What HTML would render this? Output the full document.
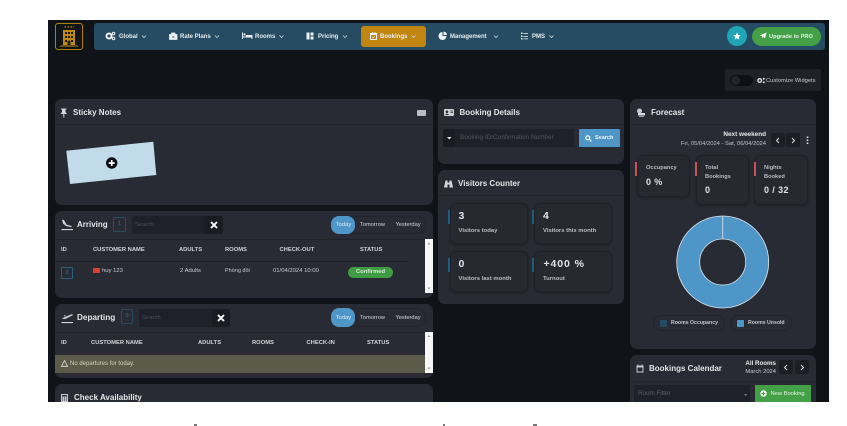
<!DOCTYPE html>
<html><head><meta charset="utf-8">
<style>
html,body{margin:0;padding:0;background:#fff}
#r{position:relative;width:847px;height:426px;overflow:hidden;background:#fff;font-family:"Liberation Sans",sans-serif;color:#dfe2e6;filter:blur(.3px)}
#d{position:absolute;left:48px;top:20px;width:781px;height:382px;background:#101418}
.a{position:absolute;white-space:nowrap}
.b{position:absolute;box-sizing:border-box}
.card{position:absolute;box-sizing:border-box;background:#292b34;border-radius:7px;overflow:hidden}
.line{position:absolute;height:1px;background:#23252d}
.t{position:absolute;white-space:nowrap;font-weight:bold;font-size:8px;color:#e2e4e8;line-height:10px}
.n{position:absolute;white-space:nowrap;font-weight:bold;font-size:6px;color:#e8ecef;line-height:8px}
.th{position:absolute;white-space:nowrap;font-weight:bold;font-size:5.8px;color:#cfd2d7;line-height:8px}
.td{position:absolute;white-space:nowrap;font-size:5.9px;color:#c6c9ce;line-height:8px}
.s{position:absolute;box-sizing:border-box;background:#272931;border:1px solid #1f2128;border-radius:6px;box-shadow:0 1px 2px #1c1e24}
.bar{position:absolute;width:2px;height:14px}
.lab{position:absolute;white-space:nowrap;font-size:5.9px;font-weight:bold;color:#b9bcc3;line-height:8px}
.val{position:absolute;white-space:nowrap;font-size:10.500px;font-weight:bold;color:#dfe2e6;line-height:12px;letter-spacing:.9px}
.sb{position:absolute;left:425px;width:8px;background:#f6f6f6}
.btn{position:absolute;box-sizing:border-box;background:#1b1e25;border-radius:2px}
svg{position:absolute;overflow:visible}
</style></head><body><div id="r">
<div id="d"></div>

<!-- logo -->
<div class="b" style="left:55px;top:23px;width:28px;height:27px;border:1px solid #b07f10;border-radius:3px;background:#111417"></div>
<svg style="left:55px;top:23px" width="28" height="27" viewBox="0 0 28 27">
<path d="M8 7h12v15H8z" fill="#c0890f"/><path d="M6 22h16l2 2H4z" fill="#6a5114"/>
<path d="M9.500 4h1.600M12.500 4h1.600M15.500 4h1.600M18.500 4h.8" stroke="#9a7414" stroke-width="1.400"/>
<path d="M10 9h2v2h-2zM13 9h2v2h-2zM16 9h2v2h-2zM10 13h2v2h-2zM13 13h2v2h-2zM16 13h2v2h-2zM10 17h2v2h-2zM16 17h2v2h-2zM12.500 22v-3a1.500 1.500 0 0 1 3 0v3z" fill="#1a1a14"/>
</svg>

<!-- nav -->
<div class="b" style="left:94px;top:23px;width:731px;height:27px;background:#254c63;border-radius:3px"></div>
<div class="b" style="left:361px;top:26px;width:65px;height:21px;background:#c0860f;border-radius:3px"></div>
<svg style="left:0;top:0" width="847" height="60" fill="#eef1f3">
<circle cx="109" cy="36" r="2.500" fill="none" stroke="#eef1f3" stroke-width="2"/><circle cx="113.500" cy="33.500" r="1.300" fill="none" stroke="#eef1f3"/><circle cx="113.500" cy="38.500" r="1.300" fill="none" stroke="#eef1f3"/>
<path d="M169.500 34.500h7.500v5h-7.500zM171.500 34.500v-1.500h3.500v1.500" fill="#eef1f3" stroke="#eef1f3" stroke-width=".8"/><path d="M172.300 36.500h2v1h-2z" fill="#254c63"/>
<path d="M242 32.500v6.500h1v-1.500h8.500V39h1v-4h-6.500v1.500H243v-4z"/><rect x="243.500" y="33.500" width="2" height="2"/>
<path d="M306.500 32.500h3v7h-3zM310.500 32.500h3v3h-3zM310.500 36.500h3v3h-3z"/>
<path d="M370.500 33.500h6v6h-6z" fill="none" stroke="#eef1f3"/><path d="M370.500 33h6v2h-6zM372 32h.8v2H372zM374.500 32h.8v2h-.8z"/><path d="M372 37l1 1 2-2" fill="none" stroke="#eef1f3" stroke-width=".6"/>
<path d="M442.500 32a4 4 0 1 0 4 4h-4z"/><path d="M443.500 31.500a4 4 0 0 1 3.500 3.500h-3.500z"/>
<path d="M521 32.500h1.500v1.500H521zM521 35.500h1.500V37H521zM521 38h1.500v1.500H521zM523.500 33h4.500v.8h-4.500zM523.500 36h4.500v.8h-4.500zM523.500 38.500h4.500v.8h-4.500z"/>
<g fill="none" stroke="#cfd8de" stroke-width=".8">
<path d="M142 35.500l2 2 2-2M215 35.500l2 2 2-2M279.500 35.500l2 2 2-2M343 35.500l2 2 2-2M411.500 35.500l2 2 2-2M494 35.500l2 2 2-2M549.500 35.500l2 2 2-2"/>
</g>
</svg>
<div class="n" style="left:119px;top:33px">Global</div>
<div class="n" style="left:180px;top:33px">Rate Plans</div>
<div class="n" style="left:255px;top:33px">Rooms</div>
<div class="n" style="left:318px;top:33px">Pricing</div>
<div class="n" style="left:380px;top:33px">Bookings</div>
<div class="n" style="left:450px;top:33px">Management</div>
<div class="n" style="left:532px;top:33px">PMS</div>
<div class="b" style="left:727px;top:26px;width:20px;height:20px;border-radius:50%;background:#1fa5b5"></div>
<svg style="left:727px;top:26px" width="20" height="20"><path d="M10 6.500l1.100 2.400 2.600.3-1.900 1.800.5 2.600-2.300-1.300-2.300 1.300.5-2.600-1.900-1.800 2.600-.3z" fill="#fff"/></svg>
<div class="b" style="left:752px;top:27px;width:69px;height:19px;border-radius:10px;background:#43a047"></div>
<svg style="left:759px;top:32px" width="8" height="8"><path d="M7.500.5L6 6.500 4.500 4.500 3.500 6.500 3 4 .5 3.500z" fill="#fff"/></svg>
<div class="n" style="left:769px;top:32.500px;color:#e7f3e6;font-size:5.700px">Upgrade to PRO</div>

<!-- customize -->
<div class="b" style="left:725px;top:69px;width:96px;height:22px;background:#1f2228;border-radius:2px"></div>
<div class="b" style="left:730px;top:75px;width:23px;height:11px;background:#0d1014;border-radius:6px"></div>
<div class="b" style="left:731px;top:76px;width:9px;height:9px;background:#22252c;border-radius:50%"></div>
<svg style="left:757px;top:77px" width="9" height="7"><circle cx="2.700" cy="3.500" r="1.800" fill="none" stroke="#dfe2e6" stroke-width="1.400"/><circle cx="6.800" cy="1.700" r="1" fill="#dfe2e6"/><circle cx="6.800" cy="5.300" r="1" fill="#dfe2e6"/></svg>
<div class="td" style="left:766px;top:77px;font-size:5.750px;color:#c9ccd1">Customize Widgets</div>

<!-- sticky -->
<div class="card" style="left:55px;top:99px;width:378px;height:106px"></div>
<div class="line" style="left:55px;top:124px;width:378px"></div>
<svg style="left:60px;top:108px" width="8" height="10"><path d="M1 .500h5.500v1H5.500v2.500L7 6H4.300v3.500H3.300V6H.5L2 4V1.500H1z" fill="#d4d6da"/></svg>
<div class="t" style="left:73px;top:108px">Sticky Notes</div>
<div class="b" style="left:417px;top:110px;width:9px;height:6px;background:#b9bcc0;border-radius:1px"></div>
<svg style="left:0;top:0" width="847" height="200"><polygon points="66.300,150.700 153.300,141.700 156.300,175 70,184" fill="#c1dbea"/><circle cx="111.700" cy="163" r="5.700" fill="#0a0c10"/><path d="M111.700 160v6M108.700 163h6" stroke="#fff" stroke-width="1.700"/></svg>

<!-- arriving -->
<div class="card" style="left:55px;top:211px;width:378px;height:87px"></div>
<div class="line" style="left:55px;top:239px;width:378px;background:#1f2128"></div>
<div class="line" style="left:55px;top:261px;width:353px;background:#1f2128"></div>
<svg style="left:61px;top:219px" width="13" height="12"><path d="M1 .500l2 .6 2.500 4.500 4 1.100c1 .3 1.500 1 1.200 1.500L5 7 2 4.500zM.5 10h11.500v1.100H.5z" fill="#d4d6da"/></svg>
<div class="t" style="left:77px;top:220px">Arriving</div>
<div class="b" style="left:113px;top:217px;width:13px;height:15px;border:1px solid #254c63;border-radius:2px;color:#2f6a8a;font-size:5.500px;text-align:center;line-height:13px">1</div>
<div class="b" style="left:132px;top:216px;width:73px;height:18px;background:#1e2129;border-radius:2px 0 0 2px"></div>
<div class="td" style="left:135px;top:221px;color:#4c5059">Search</div>
<div class="b" style="left:205px;top:216px;width:18px;height:18px;background:#191c22;border-radius:0 2px 2px 0"></div>
<svg style="left:210px;top:221px" width="8" height="8"><path d="M1 1l6 6M7 1l-6 6" stroke="#fff" stroke-width="1.900"/></svg>
<div class="b" style="left:331px;top:216px;width:95px;height:18px;border:1px solid #22252c;border-radius:9px"></div>
<div class="b" style="left:331px;top:216px;width:24px;height:18px;background:#4f96c8;border-radius:8px"></div>
<div class="td" style="left:335.500px;top:221px;color:#dbe9f3">Today</div>
<div class="td" style="left:360px;top:221px;color:#d3d6da;font-size:5.700px">Tomorrow</div>
<div class="td" style="left:395.500px;top:221px;color:#d3d6da;font-size:5.700px">Yesterday</div>
<div class="sb" style="top:239px;height:54px"></div>
<svg style="left:425px;top:239px" width="8" height="54"><path d="M2.500 5.500L4 3.500l1.500 2zM2.500 48.500L4 50.500l1.500-2z" fill="#9a9a9a"/></svg>
<div class="th" style="left:61px;top:246px">ID</div>
<div class="th" style="left:93px;top:246px">CUSTOMER NAME</div>
<div class="th" style="left:179px;top:246px">ADULTS</div>
<div class="th" style="left:225px;top:246px">ROOMS</div>
<div class="th" style="left:279.500px;top:246px">CHECK-OUT</div>
<div class="th" style="left:360px;top:246px">STATUS</div>
<div class="b" style="left:61px;top:267px;width:12px;height:12px;border:1px solid #2a5f7d;border-radius:1px;color:#3f7ea1;font-size:5.500px;text-align:center;line-height:11px">2</div>
<div class="b" style="left:93px;top:268px;width:7px;height:5px;background:#d8402c"></div>
<div class="td" style="left:102px;top:267px">huy 123</div>
<div class="td" style="left:180px;top:267px">2 Adults</div>
<div class="td" style="left:225px;top:267px;font-size:5.500px;font-family:'Liberation Sans','Noto Sans CJK SC',sans-serif">Phòng đôi</div>
<div class="td" style="left:273px;top:267px">01/04/2024 10:00</div>
<div class="b" style="left:348px;top:267px;width:45px;height:11px;background:#3f9c45;border-radius:6px;color:#d9edd9;font-size:5.800px;font-weight:bold;text-align:center;line-height:11px">Confirmed</div>

<!-- departing -->
<div class="card" style="left:55px;top:304px;width:378px;height:74px"></div>
<div class="line" style="left:55px;top:332px;width:378px;background:#1f2128"></div>
<svg style="left:61px;top:312px" width="13" height="12"><path d="M.5 6.500l9.500-4c1-.4 2 0 2.200.5L4 7zM.5 10h11.500v1.100H.5zM3 3l2 .8-1.500.8z" fill="#d4d6da"/></svg>
<div class="t" style="left:77px;top:312.500px;font-size:8.200px">Departing</div>
<div class="b" style="left:121px;top:309px;width:12px;height:15px;border:1px solid #254c63;border-radius:2px;color:#2f6a8a;font-size:5.500px;text-align:center;line-height:13px">0</div>
<div class="b" style="left:139px;top:309px;width:73px;height:18px;background:#1e2129;border-radius:2px 0 0 2px"></div>
<div class="td" style="left:142px;top:314px;color:#4c5059">Search</div>
<div class="b" style="left:212px;top:309px;width:18px;height:18px;background:#191c22;border-radius:0 2px 2px 0"></div>
<svg style="left:217px;top:314px" width="8" height="8"><path d="M1 1l6 6M7 1l-6 6" stroke="#fff" stroke-width="1.900"/></svg>
<div class="b" style="left:331px;top:308px;width:95px;height:19px;border:1px solid #22252c;border-radius:9px"></div>
<div class="b" style="left:331px;top:308px;width:24px;height:19px;background:#4f96c8;border-radius:8px"></div>
<div class="td" style="left:335.500px;top:314px;color:#dbe9f3">Today</div>
<div class="td" style="left:360px;top:314px;color:#d3d6da;font-size:5.700px">Tomorrow</div>
<div class="td" style="left:395.500px;top:314px;color:#d3d6da;font-size:5.700px">Yesterday</div>
<div class="sb" style="top:332px;height:41px"></div>
<svg style="left:425px;top:332px" width="8" height="41"><path d="M2.500 5L4 3l1.500 2zM2.500 35.500L4 37.500l1.500-2z" fill="#9a9a9a"/></svg>
<div class="th" style="left:61px;top:339px">ID</div>
<div class="th" style="left:91px;top:339px">CUSTOMER NAME</div>
<div class="th" style="left:198px;top:339px">ADULTS</div>
<div class="th" style="left:252px;top:339px">ROOMS</div>
<div class="th" style="left:306.500px;top:339px">CHECK-IN</div>
<div class="th" style="left:367px;top:339px">STATUS</div>
<div class="b" style="left:55px;top:355px;width:370px;height:18px;background:#5c5a48"></div>
<svg style="left:61px;top:360px" width="7" height="7"><path d="M3.500 .6L6.600 6.300H.4z" fill="none" stroke="#e4e3da" stroke-width=".8"/></svg>
<div class="td" style="left:70px;top:360px;color:#d5d4c8;font-size:6px">No departures for today.</div>

<!-- check availability -->
<div class="card" style="left:55px;top:384px;width:378px;height:18px;border-radius:7px 7px 0 0"></div>
<svg style="left:61px;top:394px" width="7" height="8"><path d="M0 0h7v8H0z" fill="#c8cace"/><path d="M1 1h5v1.500H1zM1 3.500h1v1H1zM3 3.500h1v1H3zM5 3.500h1v1H5zM1 5.500h1v1H1zM3 5.500h1v1H3zM5 5.500h1v1H5z" fill="#292b34"/></svg>
<div class="t" style="left:74px;top:393px;height:9px;overflow:hidden">Check Availability</div>

<!-- booking details -->
<div class="card" style="left:438px;top:99px;width:186px;height:65px"></div>
<div class="line" style="left:438px;top:124px;width:186px"></div>
<svg style="left:444px;top:109px" width="10" height="7"><rect width="10" height="7" rx="1" fill="#cfd1d5"/><circle cx="3" cy="2.800" r="1.300" fill="#292b34"/><path d="M1 6c.3-1.500 3.700-1.500 4 0z" fill="#292b34"/><path d="M6.500 2h2.500M6.500 3.500h2.500" stroke="#292b34" stroke-width=".7"/></svg>
<div class="t" style="left:459.500px;top:108px">Booking Details</div>
<div class="b" style="left:443px;top:129px;width:12px;height:18px;background:#191c22;border-radius:2px 0 0 2px"></div>
<svg style="left:447px;top:137px" width="5" height="3"><path d="M0 0h4.500L2.250 2.500z" fill="#dfe2e6"/></svg>
<div class="b" style="left:455px;top:129px;width:119px;height:18px;background:#1e2129"></div>
<div class="td" style="left:460px;top:134px;color:#52565f;font-size:6.400px">Booking ID/Confirmation Number</div>
<div class="b" style="left:578.500px;top:129px;width:41.500px;height:18px;background:#4f96c8;border-radius:1px"></div>
<svg style="left:585px;top:134.500px" width="7" height="7"><circle cx="2.800" cy="2.800" r="2" fill="none" stroke="#fff" stroke-width="1.100"/><path d="M4.300 4.300L6.500 6.500" stroke="#fff" stroke-width="1.200"/></svg>
<div class="td" style="left:595px;top:134px;color:#eaf2f8;font-weight:bold;font-size:5.500px">Search</div>

<!-- visitors -->
<div class="card" style="left:438px;top:170px;width:186px;height:134px"></div>
<div class="line" style="left:438px;top:195px;width:186px"></div>
<svg style="left:444px;top:180px" width="9" height="8"><path d="M1.500 .5h2v2h2v-2h2L9 7.500H5.500V4.500h-2v3H0z" fill="#d4d6da"/></svg>
<div class="t" style="left:458px;top:179px">Visitors Counter</div>
<div class="s" style="left:450px;top:203px;width:78px;height:41px"></div>
<div class="s" style="left:534px;top:203px;width:78px;height:41px"></div>
<div class="s" style="left:450px;top:251px;width:78px;height:41px"></div>
<div class="s" style="left:534px;top:251px;width:78px;height:41px"></div>
<div class="bar" style="left:448px;top:210px;background:#1f5d80"></div>
<div class="bar" style="left:532px;top:210px;background:#1f5d80"></div>
<div class="bar" style="left:448px;top:258px;background:#1f5d80"></div>
<div class="bar" style="left:532px;top:258px;background:#1f5d80"></div>
<div class="val" style="left:458.500px;top:210px">3</div>
<div class="val" style="left:543px;top:210px">4</div>
<div class="val" style="left:458.500px;top:258px">0</div>
<div class="val" style="left:543.500px;top:258px">+400 %</div>
<div class="lab" style="left:458.500px;top:227px">Visitors today</div>
<div class="lab" style="left:543px;top:227px">Visitors this month</div>
<div class="lab" style="left:458.500px;top:275px">Visitors last month</div>
<div class="lab" style="left:543px;top:275px">Turnout</div>

<!-- forecast -->
<div class="card" style="left:630px;top:99px;width:186px;height:250px"></div>
<div class="line" style="left:630px;top:124px;width:186px"></div>
<svg style="left:636px;top:108px" width="10" height="10"><circle cx="3.500" cy="3" r="2.500" fill="#c8cace"/><path d="M2 5h7v2.500H2z" fill="#d8dade"/><path d="M3 8.500h5" stroke="#9a9da3"/></svg>
<div class="t" style="left:651px;top:108px">Forecast</div>
<div class="a" style="right:81px;top:131px;font-size:6.400px;font-weight:bold;color:#e6e8eb;line-height:8px">Next weekend</div>
<div class="a" style="right:81px;top:139.500px;font-size:5.800px;color:#bfc2c8;line-height:8px">Fri, 05/04/2024 - Sat, 06/04/2024</div>
<div class="btn" style="left:771px;top:133px;width:14px;height:14px"></div>
<div class="btn" style="left:786px;top:133px;width:14px;height:14px"></div>
<svg style="left:0;top:0" width="847" height="150" fill="none" stroke="#dfe2e6" stroke-width="1"><path d="M779 138l-2.500 2.500 2.500 2.500M792 138l2.500 2.500-2.500 2.500"/><path d="M807.500 136.500v1.500M807.500 139.500v1.500M807.500 142.500v1.500" stroke-width="1.600"/></svg>
<div class="s" style="left:637px;top:155px;width:53px;height:42px"></div>
<div class="s" style="left:696px;top:155px;width:53px;height:50px"></div>
<div class="s" style="left:754px;top:155px;width:54px;height:50px"></div>
<div class="bar" style="left:635px;top:162px;background:#c65454"></div>
<div class="bar" style="left:695px;top:162px;background:#c65454"></div>
<div class="bar" style="left:754px;top:162px;background:#c65454"></div>
<div class="lab" style="left:646px;top:164px;font-size:5.700px">Occupancy</div>
<div class="lab" style="left:705px;top:164px;font-size:5.700px">Total</div>
<div class="lab" style="left:705px;top:173px;font-size:5.700px">Bookings</div>
<div class="lab" style="left:764px;top:164px;font-size:5.700px">Nights</div>
<div class="lab" style="left:764px;top:173px;font-size:5.700px">Booked</div>
<div class="val" style="left:646px;top:176px;font-size:9px;letter-spacing:.4px">0 %</div>
<div class="val" style="left:705px;top:184px;font-size:9px;letter-spacing:.4px">0</div>
<div class="val" style="left:764px;top:184px;font-size:9px;letter-spacing:.4px">0 / 32</div>
<svg style="left:0;top:0" width="847" height="340">
<circle cx="722.700" cy="262" r="34.500" fill="none" stroke="#4f96c8" stroke-width="23"/>
<circle cx="722.700" cy="262" r="46" fill="none" stroke="#dfe6ea" stroke-width=".8"/>
<circle cx="722.700" cy="262" r="23" fill="none" stroke="#dfe6ea" stroke-width=".8"/>
<path d="M722.700 216v23" stroke="#dfe6ea" stroke-width=".8"/>
</svg>
<div class="b" style="left:653px;top:315px;width:72px;height:16px;border:1px solid #21232a;border-radius:8px"></div>
<div class="b" style="left:730px;top:315px;width:62px;height:16px;border:1px solid #21232a;border-radius:8px"></div>
<div class="b" style="left:660px;top:320px;width:7px;height:7px;background:#254c63;border-radius:1px"></div>
<div class="b" style="left:737px;top:320px;width:7px;height:7px;background:#4f96c8;border-radius:1px"></div>
<div class="lab" style="left:671px;top:319px;color:#c3c6cb;font-size:5.200px">Rooms Occupancy</div>
<div class="lab" style="left:748px;top:319px;color:#c3c6cb;font-size:5.200px">Rooms Unsold</div>

<!-- calendar -->
<div class="card" style="left:630px;top:355px;width:186px;height:47px;border-radius:7px 7px 0 0"></div>
<div class="line" style="left:630px;top:381px;width:186px"></div>
<svg style="left:636px;top:364px" width="8" height="9"><path d="M.5 1.500h7v7h-7z" fill="#c8cace"/><path d="M1.500 3.500h5v4h-5z" fill="#292b34"/><path d="M2 .5v2M6 .5v2" stroke="#c8cace"/></svg>
<div class="t" style="left:649px;top:364px">Bookings Calendar</div>
<div class="a" style="right:71px;top:360px;font-size:6.200px;font-weight:bold;color:#e6e8eb;line-height:8px">All Rooms</div>
<div class="a" style="right:71px;top:368px;font-size:5.800px;color:#c5c8cd;line-height:8px">March 2024</div>
<div class="btn" style="left:779px;top:360px;width:14px;height:14px"></div>
<div class="btn" style="left:795px;top:360px;width:14px;height:14px"></div>
<svg style="left:0;top:0" width="847" height="380" fill="none" stroke="#dfe2e6"><path d="M787 365l-2.500 2.500 2.500 2.500M801 365l2.500 2.500-2.500 2.500"/></svg>
<div class="b" style="left:634px;top:385px;width:116px;height:17px;background:#1e2129"></div>
<div class="td" style="left:638px;top:390px;color:#5a5e67;font-size:6.300px">Room Filter</div>
<svg style="left:744px;top:394px" width="4" height="3"><path d="M0 0h3.500L1.750 2z" fill="#777a82"/></svg>
<div class="b" style="left:755px;top:385px;width:56px;height:17px;background:#43a047"></div>
<svg style="left:760px;top:390px" width="7" height="7"><circle cx="3.500" cy="3.500" r="3.200" fill="#fff"/><path d="M3.500 1.600v3.800M1.600 3.500h3.800" stroke="#43a047" stroke-width="1.100"/></svg>
<div class="td" style="left:770.500px;top:390px;color:#e3f2e3;font-size:5.800px">New Booking</div>

<!-- bottom fragments -->
<div class="b" style="left:194px;top:424px;width:3px;height:2px;background:#777"></div>
<div class="b" style="left:443px;top:424px;width:2px;height:2px;background:#777"></div>
<div class="b" style="left:533px;top:424px;width:4px;height:2px;background:#777"></div>
</div></body></html>
